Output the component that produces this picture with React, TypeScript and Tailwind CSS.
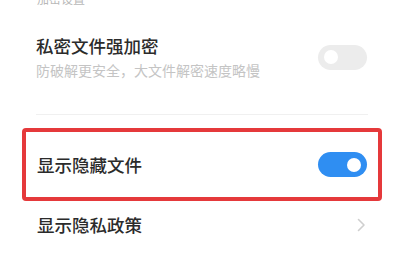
import React, { useState } from "react"

const cjk = { fontFamily: '"Noto Sans CJK SC", "Noto Sans", sans-serif' }

function Toggle({ on, onClick }: { on: boolean; onClick?: () => void }) {
  return (
    <button
      onClick={onClick}
      className={`relative w-[49px] h-[25px] rounded-full shrink-0 ${on ? "bg-[#2f8ef2]" : "bg-[#ececec]"}`}
    >
      <span
        className={`absolute top-[5.5px] w-[14px] h-[14px] rounded-full bg-white ${on ? "left-[29px]" : "left-[6px]"}`}
      />
    </button>
  )
}

export default function App() {
  const [strong, setStrong] = useState(false)
  const [showHidden, setShowHidden] = useState(true)

  return (
    <div className="w-[404px] h-[263px] bg-white overflow-hidden" style={cjk}>
      {/* section header, scrolled partly out of view */}
      <div className="-mt-[8px] pl-[37px] text-[12px] leading-[14px] text-[#b8b8b8]">加密设置</div>

      {/* 私密文件强加密 */}
      <div className="flex items-center justify-between pl-[36px] pr-[37px] mt-[30px]">
        <div className="flex flex-col">
          <span className="text-[17.5px] leading-[20px] font-medium text-[#2b2b2b]">私密文件强加密</span>
          <span className="mt-[6px] text-[14px] leading-[16px] text-[#c4c4c4]">防破解更安全，大文件解密速度略慢</span>
        </div>
        <Toggle on={strong} onClick={() => setStrong(!strong)} />
      </div>

      <div className="mx-[36px] mt-[36px] h-px bg-[#f0f0f0]" />

      {/* highlighted row */}
      <div className="mx-[22px] mt-[13px] h-[73px] border-4 border-[#e5393b] rounded-[4px] flex items-center justify-between pl-[11px] pr-[11px]">
        <span className="text-[17.5px] leading-[20px] font-medium text-[#2b2b2b]">显示隐藏文件</span>
        <Toggle on={showHidden} onClick={() => setShowHidden(!showHidden)} />
      </div>

      {/* 显示隐私政策 */}
      <div className="flex items-center justify-between pl-[37px] pr-[38px] mt-[14px]">
        <span className="text-[17.5px] leading-[20px] font-medium text-[#2b2b2b]">显示隐私政策</span>
        <svg width="9" height="14" viewBox="0 0 9 14" fill="none">
          <path d="M1.5 1.5 L7 7 L1.5 12.5" stroke="#cfcfcf" strokeWidth="1.6" strokeLinecap="round" strokeLinejoin="round" />
        </svg>
      </div>
    </div>
  )
}
